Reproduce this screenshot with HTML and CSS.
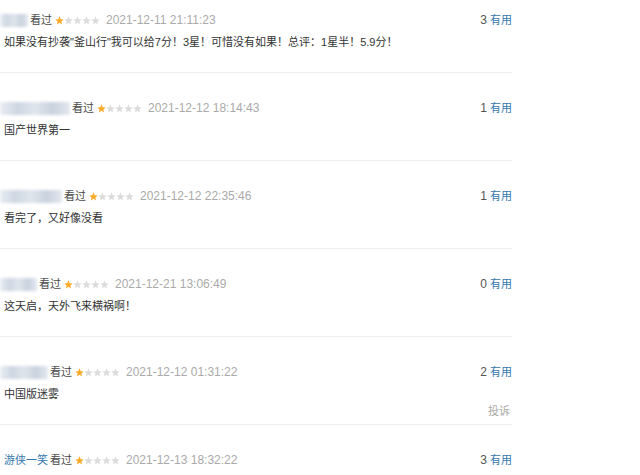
FILE: index.html
```html
<!DOCTYPE html>
<html lang="zh-CN">
<head>
<meta charset="utf-8">
<link rel="stylesheet" href="styles.css">
</head>
<body>
<svg width="0" height="0" class="defs">
  <defs>
    <symbol id="star" viewBox="0 0 10 10">
      <polygon points="5,0.4 6.3,3.6 9.7,3.8 7.1,6 7.9,9.4 5,7.6 2.1,9.4 2.9,6 0.3,3.8 3.7,3.6"/>
    </symbol>
  </defs>
</svg>
<div class="list">
  <div class="item">
    <div class="head">
      <div class="info">
        <span class="blur w28"></span>
        <span class="seen">看过</span>
        <span class="stars"><svg class="on"><use href="#star"/></svg><svg><use href="#star"/></svg><svg><use href="#star"/></svg><svg><use href="#star"/></svg><svg><use href="#star"/></svg></span>
        <span class="date">2021-12-11 21:11:23</span>
      </div>
      <div class="votes"><span class="num">3</span> <span class="useful">有用</span></div>
    </div>
    <p class="text">如果没有抄袭"釜山行"我可以给7分！3星！可惜没有如果！总评：1星半！5.9分！</p>
  </div>
  <div class="item">
    <div class="head">
      <div class="info">
        <span class="blur w70"></span>
        <span class="seen">看过</span>
        <span class="stars"><svg class="on"><use href="#star"/></svg><svg><use href="#star"/></svg><svg><use href="#star"/></svg><svg><use href="#star"/></svg><svg><use href="#star"/></svg></span>
        <span class="date">2021-12-12 18:14:43</span>
      </div>
      <div class="votes"><span class="num">1</span> <span class="useful">有用</span></div>
    </div>
    <p class="text">国产世界第一</p>
  </div>
  <div class="item">
    <div class="head">
      <div class="info">
        <span class="blur w62"></span>
        <span class="seen">看过</span>
        <span class="stars"><svg class="on"><use href="#star"/></svg><svg><use href="#star"/></svg><svg><use href="#star"/></svg><svg><use href="#star"/></svg><svg><use href="#star"/></svg></span>
        <span class="date">2021-12-12 22:35:46</span>
      </div>
      <div class="votes"><span class="num">1</span> <span class="useful">有用</span></div>
    </div>
    <p class="text">看完了，又好像没看</p>
  </div>
  <div class="item">
    <div class="head">
      <div class="info">
        <span class="blur w37"></span>
        <span class="seen">看过</span>
        <span class="stars"><svg class="on"><use href="#star"/></svg><svg><use href="#star"/></svg><svg><use href="#star"/></svg><svg><use href="#star"/></svg><svg><use href="#star"/></svg></span>
        <span class="date">2021-12-21 13:06:49</span>
      </div>
      <div class="votes"><span class="num">0</span> <span class="useful">有用</span></div>
    </div>
    <p class="text">这天启，天外飞来横祸啊！</p>
  </div>
  <div class="item has-report">
    <div class="head">
      <div class="info">
        <span class="blur w48"></span>
        <span class="seen">看过</span>
        <span class="stars"><svg class="on"><use href="#star"/></svg><svg><use href="#star"/></svg><svg><use href="#star"/></svg><svg><use href="#star"/></svg><svg><use href="#star"/></svg></span>
        <span class="date">2021-12-12 01:31:22</span>
      </div>
      <div class="votes"><span class="num">2</span> <span class="useful">有用</span></div>
    </div>
    <p class="text">中国版迷雾</p>
    <div class="foot"><span class="report">投诉</span></div>
  </div>
  <div class="item last">
    <div class="head">
      <div class="info">
        <span class="name">游侠一笑</span>
        <span class="seen">看过</span>
        <span class="stars"><svg class="on"><use href="#star"/></svg><svg><use href="#star"/></svg><svg><use href="#star"/></svg><svg><use href="#star"/></svg><svg><use href="#star"/></svg></span>
        <span class="date">2021-12-13 18:32:22</span>
      </div>
      <div class="votes"><span class="num">3</span> <span class="useful">有用</span></div>
    </div>
  </div>
</div>
</body>
</html>
```

FILE: styles.css
```css
html, body {
  margin: 0;
  padding: 0;
  background: #fff;
}
body {
  font-family: "Liberation Sans", "Noto Sans CJK SC", sans-serif;
  font-size: 11px;
  color: #333;
  overflow: hidden;
  height: 475px;
}
.defs {
  position: absolute;
  width: 0;
  height: 0;
}
.list {
  width: 512px;
}
.item {
  padding: 27px 0 22px 4px;
  border-bottom: 1px solid #eeeeee;
}
.item:first-child {
  padding-top: 12px;
}
.item.has-report {
  padding-bottom: 5px;
}
.item.last {
  padding-bottom: 0;
  border-bottom: 0;
}
.head {
  display: flex;
  justify-content: space-between;
  align-items: center;
  height: 16px;
  line-height: 16px;
}
.info {
  display: flex;
  align-items: center;
  margin-left: -4px;
}
.blur {
  display: inline-block;
  height: 13px;
  margin-right: 2px;
  background: linear-gradient(90deg, #e9edf3 0%, #cdd6e2 25%, #dfe5ec 50%, #c8d2de 75%, #e3e8ef 100%);
  filter: blur(1.5px);
}
.w28 { width: 28px; }
.w70 { width: 70px; }
.w62 { width: 62px; }
.w37 { width: 37px; }
.w48 { width: 48px; }
.name {
  color: #3377aa;
  margin-left: 4px;
  margin-right: 2px;
}
.seen {
  color: #494949;
  margin-right: 3px;
}
.stars {
  display: inline-flex;
  margin-right: 6px;
}
.stars svg {
  width: 9px;
  height: 9px;
  fill: #dcdcdc;
}
.stars svg.on {
  fill: #f6ab26;
}
.date {
  color: #aaaaaa;
  font-size: 12px;
}
.votes {
  color: #555;
}
.num {
  font-size: 12px;
}
.useful {
  color: #3377aa;
}
.text {
  margin: 6px 0 0;
  line-height: 16px;
  color: #333;
}
.foot {
  margin-top: 1px;
  line-height: 16px;
  text-align: right;
  padding-right: 2px;
}
.report {
  color: #aaaaaa;
}
```
